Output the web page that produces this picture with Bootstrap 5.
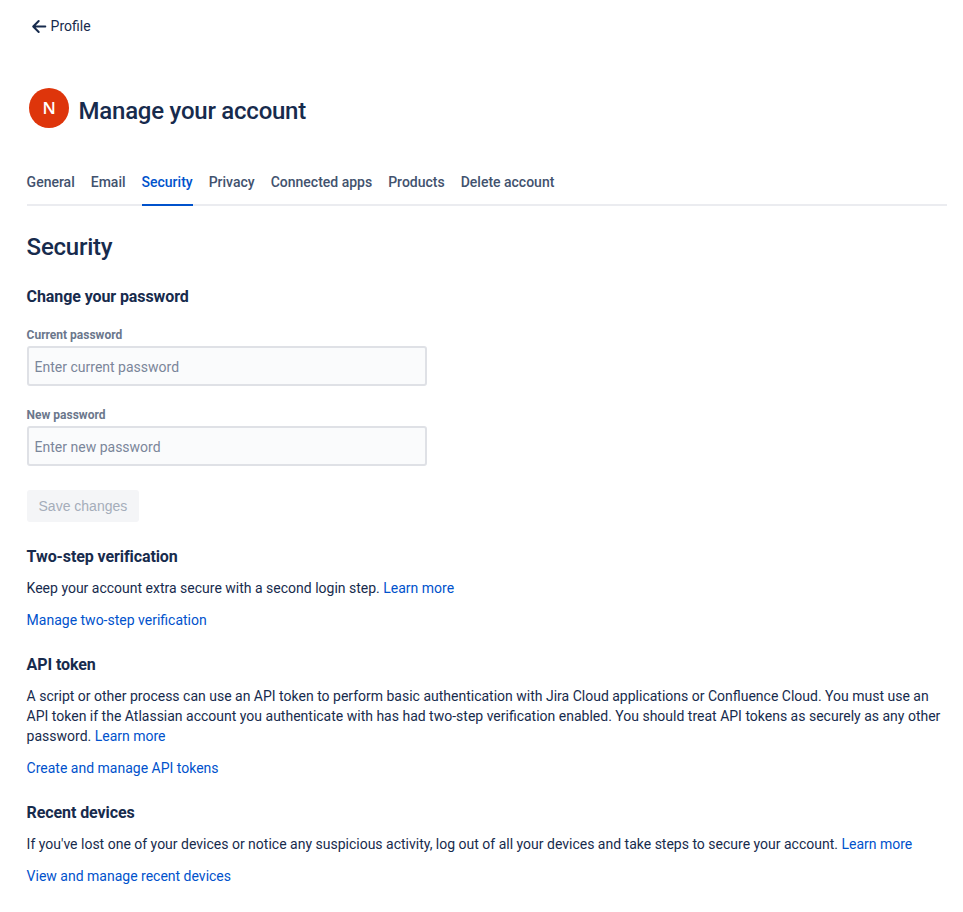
<!DOCTYPE html>
<html lang="en">
<head>
<meta charset="utf-8">
<meta name="viewport" content="width=device-width, initial-scale=1">
<title>Manage your account</title>
<link rel="stylesheet" href="https://cdn.jsdelivr.net/npm/bootstrap@5.3.0/dist/css/bootstrap.min.css">
<style>
body{font:14px/20px Roboto,sans-serif;color:#172b4d;background:#fff}
a{color:#0052cc;text-decoration:none}
.page{padding:16px 16.4px 0 26.6px}
.back-link{color:#172b4d;height:20px;padding-left:4px;gap:4px}
.account-head{margin-top:52px;height:40px;padding-left:2px;gap:10px}
.avatar{width:40px;height:40px;padding:0 0 1px 1px;background:#de350b;color:#fff;font:600 17px/20px "Open Sans","Noto Sans",sans-serif}
.title-lg{font-size:24px;line-height:28px;font-weight:500;letter-spacing:-.01em;margin:0}
.account-head .title-lg{padding-top:6px}
.account-tabs{margin-top:32px;height:46px;border-bottom:2px solid #ebecf0;gap:16px}
.account-tabs .nav-link{padding:12px 0 0;height:46px;color:#42526e;font-weight:500;line-height:20px}
.account-tabs .nav-link.active{color:#0052cc;border-bottom:2px solid #0052cc}
.title-section{margin-top:27px}
.title-sm{font-size:16px;line-height:20px;font-weight:700;letter-spacing:-.006em;margin:0}
.form-label{font-size:12px;line-height:16px;font-weight:700;color:#6b778c;margin:0 0 3px;display:block}
.form-control{width:400px;height:40px;border:2px solid #dfe1e6;border-radius:3px;background:#fafbfc;padding:2px 6px 0;font-size:14px;line-height:20px}
.form-control::placeholder{color:#7a869a}
.field-next{margin-top:21px}
.save-btn,.save-btn:disabled{font:14px/20px "Liberation Sans",Arial,sans-serif;width:112px;height:32px;padding:0 0 0 .6px;border:0;border-radius:3px;background:#f4f5f7;color:#a5adba;opacity:1}
.info{margin-top:25px}
.info p{margin:12px 0 0}
.info .title-sm + p{margin-top:11px}
.info-password{margin-top:26px}
</style>
</head>
<body>
<main class="page">
<a href="#" class="back-link d-flex align-items-center">
<svg width="16" height="16" viewBox="0 0 16 16" fill="none" stroke="currentColor" stroke-width="2" stroke-linecap="round" stroke-linejoin="round"><path d="M14.300 8.500H2.300M7.700 3 2.200 8.500l5.500 5.500"/></svg><span>Profile</span></a>
<header class="account-head d-flex"><span class="avatar rounded-circle d-flex align-items-center justify-content-center">N</span><h1 class="title-lg d-flex align-items-center">Manage your account</h1></header>
<nav class="account-tabs nav flex-nowrap">
<a class="nav-link" href="#">General</a><a class="nav-link" href="#">Email</a><a class="nav-link active" href="#">Security</a><a class="nav-link" href="#">Privacy</a><a class="nav-link" href="#">Connected apps</a><a class="nav-link" href="#">Products</a><a class="nav-link" href="#">Delete account</a>
</nav>
<h2 class="title-lg title-section">Security</h2>
<section class="info info-password">
<h3 class="title-sm">Change your password</h3>
<form class="d-flex flex-column align-items-start">
<div class="mt-3 pt-1"><label class="form-label" for="cur">Current password</label><input id="cur" type="password" class="form-control" placeholder="Enter current password"></div>
<div class="field-next"><label class="form-label" for="new">New password</label><input id="new" type="password" class="form-control" placeholder="Enter new password"></div>
<button class="btn save-btn mt-4" type="button" disabled>Save changes</button>
</form>
</section>
<section class="info"><h3 class="title-sm">Two-step verification</h3><p>Keep your account extra secure with a second login step. <a href="#">Learn more</a></p><p><a href="#">Manage two-step verification</a></p></section>
<section class="info"><h3 class="title-sm">API token</h3><p>A script or other process can use an API token to perform basic authentication with Jira Cloud applications or Confluence Cloud. You must use an API token if the Atlassian account you authenticate with has had two-step verification enabled. You should treat API tokens as securely as any other password. <a href="#">Learn more</a></p><p><a href="#">Create and manage API tokens</a></p></section>
<section class="info"><h3 class="title-sm">Recent devices</h3><p>If you've lost one of your devices or notice any suspicious activity, log out of all your devices and take steps to secure your account. <a href="#">Learn more</a></p><p><a href="#">View and manage recent devices</a></p></section>
</main>
<script src="https://cdn.jsdelivr.net/npm/bootstrap@5.3.0/dist/js/bootstrap.bundle.min.js"></script>
</body>
</html>
